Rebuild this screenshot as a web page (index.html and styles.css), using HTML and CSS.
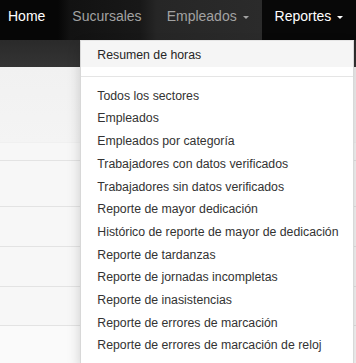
FILE: index.html
```html
<!DOCTYPE html>
<html lang="es">
<head>
    <meta charset="UTF-8">
    <meta name="viewport" content="width=device-width, initial-scale=1.0">
    <title>Reportes</title>
    <link rel="stylesheet" href="styles.css">
</head>
<body>
    <nav class="navbar">
        <ul class="nav">
            <li class="active"><a href="#">Home</a></li>
            <li><a href="#">Sucursales</a></li>
            <li><a href="#">Empleados <span class="caret"></span></a></li>
            <li class="open">
                <a href="#">Reportes <span class="caret"></span></a>
                <ul class="dropdown-menu">
                    <li class="focus"><a href="#">Resumen de horas</a></li>
                    <li class="divider"></li>
                    <li><a href="#">Todos los sectores</a></li>
                    <li><a href="#">Empleados</a></li>
                    <li><a href="#">Empleados por categoría</a></li>
                    <li><a href="#">Trabajadores con datos verificados</a></li>
                    <li><a href="#">Trabajadores sin datos verificados</a></li>
                    <li><a href="#">Reporte de mayor dedicación</a></li>
                    <li><a href="#">Histórico de reporte de mayor de dedicación</a></li>
                    <li><a href="#">Reporte de tardanzas</a></li>
                    <li><a href="#">Reporte de jornadas incompletas</a></li>
                    <li><a href="#">Reporte de inasistencias</a></li>
                    <li><a href="#">Reporte de errores de marcación</a></li>
                    <li><a href="#">Reporte de errores de marcación de reloj</a></li>
                </ul>
            </li>
        </ul>
    </nav>

    <div class="banner"></div>

    <div class="content">
        <div class="panel-head"></div>
        <div class="row row-sub"></div>
        <div class="row row-first"></div>
        <div class="row"></div>
        <div class="row"></div>
        <div class="row row-short"></div>
        <div class="row row-last"></div>
    </div>
</body>
</html>
```

FILE: styles.css
```css
body {
    font-family: "Liberation Sans", Arial, sans-serif;
    margin: 0;
    padding: 0;
    background-color: #fff;
    overflow: hidden;
}
ul {
    list-style: none;
    margin: 0;
    padding: 0;
}
a {
    text-decoration: none;
}
.navbar {
    height: 40px;
    background: linear-gradient(to right, #060606 0, #060606 58px, #121212 70px, #181818 140px, #262626 157px, #2b2b2b 262px, #080808 262px);
}
.nav {
    display: flex;
    height: 40px;
}
.nav > li {
    position: relative;
    flex-shrink: 0;
    white-space: nowrap;
}
.nav > li > a {
    display: block;
    padding: 6px 15px 14px 13px;
    font-size: 14px;
    line-height: 20px;
    color: #a2a2a2;
}
.nav > li:first-child > a {
    padding-left: 8px;
    padding-right: 14px;
}
.nav > li:nth-child(3) > a {
    padding-left: 10px;
    padding-right: 13px;
}
.nav > .active > a {
    color: #fff;
}
.nav > .open > a {
    color: #fff;
    background-color: #080808;
    padding-left: 13px;
    padding-right: 13px;
}
.caret {
    display: inline-block;
    width: 0;
    height: 0;
    margin-left: 2px;
    vertical-align: middle;
    border-top: 3px solid;
    border-left: 3px solid transparent;
    border-right: 3px solid transparent;
}
.dropdown-menu {
    position: absolute;
    top: 40px;
    right: 2px;
    width: 272px;
    padding: 0 0 6px;
    background-color: #fff;
    border: 1px solid rgba(0, 0, 0, 0.15);
    border-top: 1px solid #e5e5e5;
    box-shadow: 0 6px 12px rgba(0, 0, 0, 0.175);
    z-index: 10;
}
.dropdown-menu > li > a {
    display: block;
    padding: 3px 16px;
    font-size: 12.3px;
    line-height: 16.7px;
    color: #333;
    white-space: nowrap;
}
.dropdown-menu > .focus > a {
    padding-top: 6px;
    padding-bottom: 3px;
    background-color: #f5f5f5;
    color: #262626;
}
.dropdown-menu > .divider {
    height: 1px;
    margin: 9px 0 8px;
    background-color: #e5e5e5;
}
.banner {
    height: 27px;
    background: linear-gradient(to bottom, #2a2a2a, #343434);
}
.content {
    background-color: #f7f7f7;
}
.panel-head {
    height: 75px;
    background: linear-gradient(to bottom, #f1f1f1, #f4f4f4);
}
.row {
    height: 39px;
    border-top: 1px solid #e3e3e3;
}
.row-sub {
    height: 17px;
    border-top-color: #f0f0f0;
}
.row-first {
    height: 45px;
}
.row-short {
    height: 38px;
}
.row-last {
    height: 40px;
    background-color: #fafafa;
}
```
